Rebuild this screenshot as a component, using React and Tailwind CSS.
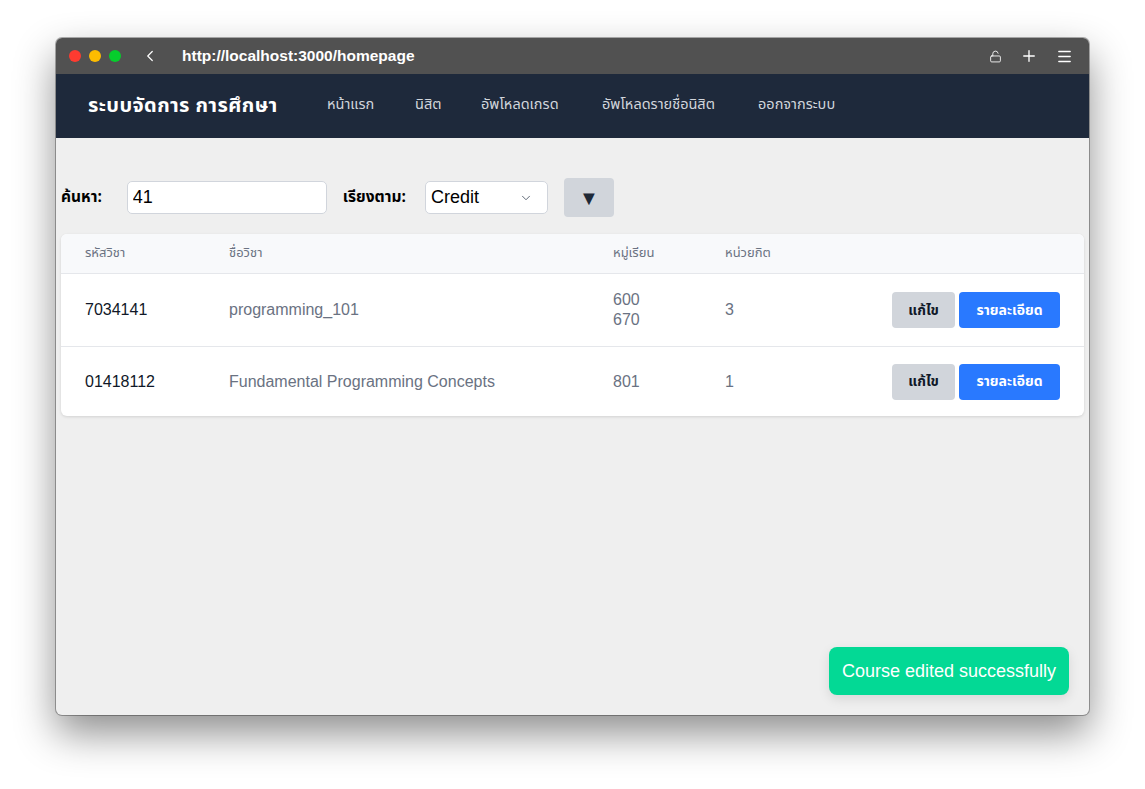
import { ChevronLeft, ChevronDown, LockOpen, Plus, Menu } from "lucide-react";

const thai = "font-['Noto_Sans_Thai','Noto_Sans','Liberation_Sans',sans-serif]";
const arial = "font-['Liberation_Sans','Noto_Sans_Thai',sans-serif]";

const courses = [
  { code: "7034141", name: "programming_101", sections: ["600", "670"], credit: "3" },
  { code: "01418112", name: "Fundamental Programming Concepts", sections: ["801"], credit: "1" },
];

export default function App() {
  return (
    <div className="w-[1145px] h-[789px] bg-white pt-[38px] pl-[56px] overflow-hidden">
      <div className="relative w-[1033px] h-[677px] rounded-[6px] overflow-hidden bg-[#efefef] shadow-[0_18px_40px_rgba(0,0,0,0.45)] ring-1 ring-black/30 flex flex-col">
        {/* browser bar */}
        <div className="h-[36px] bg-[#515151] flex items-center pl-[13px] pr-[16px] shrink-0">
          <div className="flex gap-[8px]">
            <span className="w-[12px] h-[12px] rounded-full bg-[#fe3b30]" />
            <span className="w-[12px] h-[12px] rounded-full bg-[#fdbc00]" />
            <span className="w-[12px] h-[12px] rounded-full bg-[#06cd2c]" />
          </div>
          <ChevronLeft className="ml-[20px] w-[18px] h-[18px] text-white" strokeWidth={1.6} />
          <span className={`ml-[23px] text-white text-[15.5px] ${arial} font-bold`}>http://localhost:3000/homepage</span>
          <div className="ml-auto flex items-center gap-[18px] text-white">
            <LockOpen className="w-[13px] h-[13px]" strokeWidth={1.6} />
            <Plus className="w-[18px] h-[18px]" strokeWidth={1.8} />
            <Menu className="w-[17px] h-[17px]" strokeWidth={2} />
          </div>
        </div>

        {/* nav */}
        <nav className={`h-[64px] bg-[#1e293b] flex items-center pl-[32px] shrink-0 ${thai}`}>
          <span className="text-white text-[20px] font-bold tracking-[0.4px] w-[239px]">ระบบจัดการ การศึกษา</span>
          <div className="flex items-center text-[14.5px] text-gray-300">
            <span className="w-[88px]">หน้าแรก</span>
            <span className="w-[66px]">นิสิต</span>
            <span className="w-[121px]">อัพโหลดเกรด</span>
            <span className="w-[156px]">อัพโหลดรายชื่อนิสิต</span>
            <span>ออกจากระบบ</span>
          </div>
        </nav>

        {/* content */}
        <main className="px-[5px] pt-[40px]">
          <div className="flex items-center h-[39px]">
            <label className={`text-[15.5px] font-bold text-black ${thai}`}>ค้นหา:</label>
            <input
              readOnly
              value="41"
              className={`ml-[25px] w-[200px] h-[33px] rounded-[5px] border border-gray-300 bg-white px-[5px] text-[18px] text-black ${arial}`}
            />
            <label className={`ml-[16px] text-[15.5px] font-bold text-black ${thai}`}>เรียงตาม:</label>
            <div className={`ml-[19px] w-[123px] h-[33px] rounded-[5px] border border-gray-300 bg-white flex items-center pl-[5px] pr-[14px] text-[18px] text-black ${arial}`}>
              <span>Credit</span>
              <ChevronDown className="ml-auto w-[14px] h-[14px] text-gray-600" strokeWidth={1.5} />
            </div>
            <button className="ml-[16px] w-[50px] h-[39px] rounded-[4px] bg-[#d1d5db] flex items-center justify-center text-[#1f2937] text-[20px]">
              ▼
            </button>
          </div>

          <div className="mt-[17px] bg-white rounded-[6px] shadow-[0_1px_3px_rgba(0,0,0,0.12)] overflow-hidden">
            <div className={`h-[40px] bg-[#f8f9fb] border-b border-gray-200 flex items-center text-[13px] text-gray-500 ${thai}`}>
              <span className="pl-[24px] w-[168px]">รหัสวิชา</span>
              <span className="w-[384px]">ชื่อวิชา</span>
              <span className="w-[112px]">หมู่เรียน</span>
              <span>หน่วยกิต</span>
            </div>
            {courses.map((c, i) => (
              <div
                key={c.code}
                className={`flex items-center text-[16px] ${arial} ${i === 0 ? "h-[73px] border-b border-gray-200" : "h-[69px]"}`}
              >
                <span className="pl-[24px] w-[168px] text-gray-900">{c.code}</span>
                <span className="w-[384px] text-gray-500">{c.name}</span>
                <span className="w-[112px] text-gray-500 flex flex-col leading-[20px]">
                  {c.sections.map((s) => (
                    <span key={s}>{s}</span>
                  ))}
                </span>
                <span className="text-gray-500">{c.credit}</span>
                <div className={`ml-auto mr-[24px] flex gap-[4px] text-[14px] font-bold ${thai}`}>
                  <button className="w-[63px] h-[36px] rounded-[4px] bg-[#d1d5db] text-gray-900">แก้ไข</button>
                  <button className="w-[101px] h-[36px] rounded-[4px] bg-[#2979ff] text-white">รายละเอียด</button>
                </div>
              </div>
            ))}
          </div>
        </main>

        {/* toast */}
        <div className={`absolute right-[20px] bottom-[20px] w-[240px] h-[48px] rounded-[8px] bg-[#03d995] text-white text-[18px] flex items-center justify-center shadow-[0_4px_12px_rgba(0,0,0,0.1)] ${arial}`}>
          Course edited successfully
        </div>
      </div>
    </div>
  );
}
